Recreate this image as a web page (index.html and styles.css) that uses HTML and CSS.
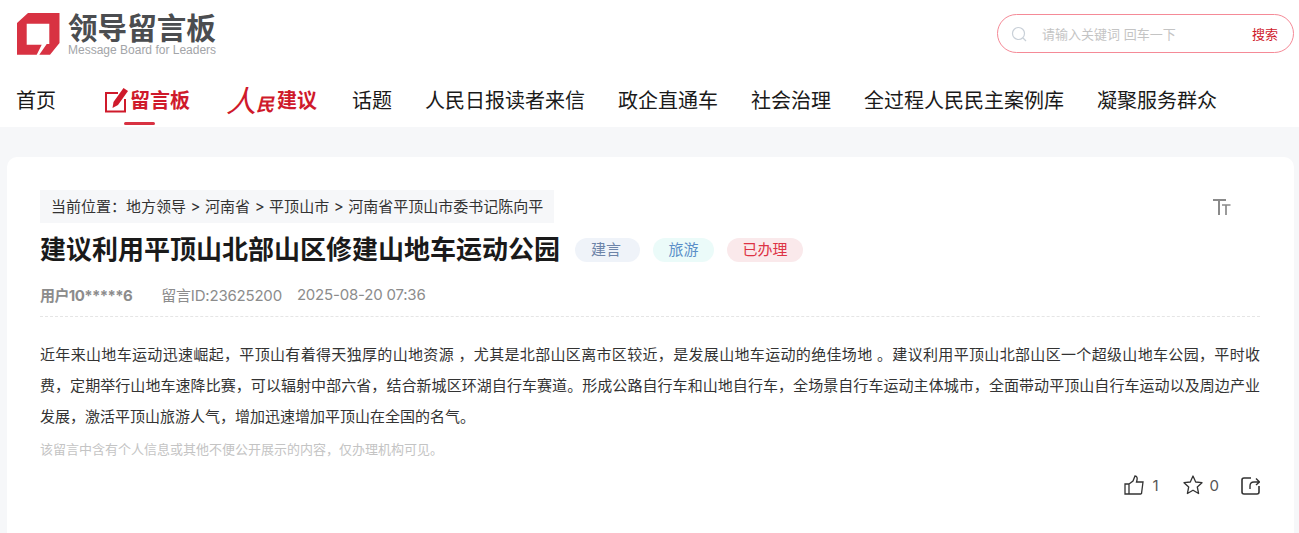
FILE: index.html
```html
<!DOCTYPE html>
<html lang="zh-CN">
<head>
<meta charset="utf-8">
<title>领导留言板</title>
<link rel="stylesheet" href="styles.css">
</head>
<body>
<header class="header">
  <div class="top">
    <div class="logo">
      <svg class="logo-mark" width="43" height="42" viewBox="0 0 43 42"><path fill="#d83242" d="M11 0H42.500V30L33 41.800H22.300L29.700 31H32.300V10.700H9.700V31.700H24.700L19.700 41.800H0V10Z"/></svg>
      <div class="logo-text">
        <div class="logo-cn">领导留言板</div>
        <div class="logo-en">Message Board for Leaders</div>
      </div>
    </div>
    <div class="search">
      <svg class="search-icon" width="16" height="16" viewBox="0 0 16 16"><circle cx="7.500" cy="7.500" r="6" fill="none" stroke="#c9d0d8" stroke-width="1.200"/><path d="M12 12l3 3" stroke="#c9d0d8" stroke-width="1.200"/></svg>
      <span class="search-ph">请输入关键词 回车一下</span>
      <span class="search-btn">搜索</span>
    </div>
  </div>
  <nav class="nav">
    <a class="nav-item nav-home">首页</a>
    <a class="nav-item nav-board">
      <svg width="24" height="25" viewBox="0 0 24 25"><path fill="none" stroke="#cf1a2b" stroke-width="2" d="M14 5H2V23.500H21V11"/><path fill="#cf1a2b" d="M19.500 0L24 3 14 17 8.500 20 9.500 14Z"/></svg>
      <span>留言板</span>
    </a>
    <a class="nav-item nav-people"><span class="people-hand"><span class="hand-big">人</span><span class="hand-small">民</span></span><span class="people-b">建议</span></a>
    <a class="nav-item">话题</a>
    <a class="nav-item">人民日报读者来信</a>
    <a class="nav-item">政企直通车</a>
    <a class="nav-item">社会治理</a>
    <a class="nav-item">全过程人民民主案例库</a>
    <a class="nav-item">凝聚服务群众</a>
  </nav>
</header>
<main class="main">
  <article class="card">
    <div class="crumb-row">
      <div class="crumb">当前位置：地方领导 &gt; 河南省 &gt; 平顶山市 &gt; 河南省平顶山市委书记陈向平</div>
      <svg class="font-size" width="20" height="17" viewBox="0 0 20 17"><path fill="none" stroke="#8a8a8a" stroke-width="2" d="M2 2H15M8 2V17"/><path fill="none" stroke="#8a8a8a" stroke-width="1.700" d="M11 7H19.500M15 7V17"/></svg>
    </div>
    <div class="title-row">
      <h1 class="title">建议利用平顶山北部山区修建山地车运动公园</h1>
      <span class="tag tag-a">建言</span>
      <span class="tag tag-b">旅游</span>
      <span class="tag tag-c">已办理</span>
    </div>
    <div class="meta">
      <b class="user">用户10*****6</b>
      <span class="msg-id">留言ID:23625200</span>
      <span>2025-08-20 07:36</span>
    </div>
    <p class="body">近年来山地车运动迅速崛起，平顶山有着得天独厚的山地资源 ，尤其是北部山区离市区较近，是发展山地车运动的绝佳场地 。建议利用平顶山北部山区一个超级山地车公园，平时收费，定期举行山地车速降比赛，可以辐射中部六省，结合新城区环湖自行车赛道。形成公路自行车和山地自行车，全场景自行车运动主体城市，全面带动平顶山自行车运动以及周边产业发展，激活平顶山旅游人气，增加迅速增加平顶山在全国的名气。</p>
    <p class="note">该留言中含有个人信息或其他不便公开展示的内容，仅办理机构可见。</p>
    <div class="actions">
      <span class="action action-like">
        <svg width="20" height="20" viewBox="0 0 20 20"><path fill="none" stroke="#333" stroke-width="1.300" d="M1 9H5V19H1ZM5 9L9 6 11 1C13 1 13.500 3 13 5L12.500 7H19L17.500 18.500 16.500 19H5"/></svg>
        <span>1</span>
      </span>
      <span class="action">
        <svg width="20" height="20" viewBox="0 0 20 20"><path fill="none" stroke="#333" stroke-width="1.300" stroke-linejoin="round" d="M10 1L12.700 7 19 7.700 14.300 12 15.600 18.500 10 15.200 4.400 18.500 5.700 12 1 7.700 7.300 7Z"/></svg>
        <span>0</span>
      </span>
      <span class="action">
        <svg width="19" height="19" viewBox="0 0 19 19"><path fill="none" stroke="#333" stroke-width="1.600" d="M10 2H3Q1 2 1 4V16Q1 18 3 18H16Q18 18 18 16V10"/><path fill="none" stroke="#333" stroke-width="1.400" d="M9 13V10Q9 6 13 6H18M15 2.500L18.500 6 15 9"/></svg>
      </span>
    </div>
  </article>
</main>
</body>
</html>
```

FILE: styles.css
```css
* { box-sizing: border-box; }
html, body { margin: 0; padding: 0; }
body {
  width: 1299px;
  height: 533px;
  overflow: hidden;
  background: #f6f7f9;
  font-family: Inter, "Noto Sans CJK SC", sans-serif;
  color: #1a1a1a;
}
.header { height: 127px; background: #fff; padding: 13px 5px 0 16px; }
.top { display: flex; justify-content: space-between; align-items: flex-start; height: 47px; }
.logo { display: flex; gap: 8px; padding-left: 1px; }
.logo-text { width: 150px; }
.logo-cn { font-size: 29.600px; line-height: 30px; font-weight: 700; color: #4b4d50; white-space: nowrap; }
.logo-en { font-family: "Liberation Sans", sans-serif; font-size: 12px; line-height: 14px; color: #a3a5a8; white-space: nowrap; }
.search { width: 297px; height: 39px; margin-top: 1px; border: 1px solid #f58a97; border-radius: 20px; display: flex; align-items: center; padding: 0 15px 0 13px; }
.search-icon { margin-right: 15px; }
.search-ph { flex: 1; font-size: 13px; color: #c4c4c4; }
.search-btn { font-size: 13px; color: #cf1a2b; }
.nav { display: flex; align-items: center; height: 41px; margin-top: 20px; font-size: 20px; color: #1a1a1a; }
.nav-item { margin-right: 33px; white-space: nowrap; line-height: 28px; }
.nav-home { margin-right: 48px; }
.nav-board { display: flex; align-items: center; gap: 2px; position: relative; margin-right: 36px; font-weight: 700; color: #cf1a2b; }
.nav-board::after { content: ""; position: absolute; left: 20px; bottom: -10px; width: 31px; height: 3px; border-radius: 2px; background: #d83242; }
.nav-people { display: flex; align-items: center; margin-right: 35px; color: #cf1a2b; }
.people-hand { display: flex; align-items: flex-end; width: 51px; font-style: italic; }
.hand-big { font-size: 30px; line-height: 34px; }
.hand-small { font-size: 18px; line-height: 26px; font-weight: 700; }
.people-b { font-weight: 700; }
.main { padding: 30px 5px 0 7px; }
.card { height: 420px; background: #fff; border-radius: 10px; padding: 33px 34px 0 33px; }
.crumb-row { display: flex; justify-content: space-between; align-items: center; height: 33px; }
.crumb { height: 33px; line-height: 33px; padding: 0 11px; background: #f6f7f9; font-size: 15px; color: #333; word-spacing: 0.350px; }
.font-size { margin-right: 29px; }
.title-row { display: flex; align-items: center; height: 32px; margin-top: 11px; }
.title { margin: 0 15px 0 0; font-size: 26px; font-weight: 700; line-height: 32px; color: #1a1a1a; white-space: nowrap; }
.tag { height: 24px; line-height: 24px; padding: 0 15.500px; border-radius: 12px; font-size: 15px; margin-right: 13px; }
.tag-a { padding: 0 19px 0 16px; background: #eff3f9; color: #6d84a8; }
.tag-b { background: #ebfbf9; color: #5a8fc8; }
.tag-c { background: #fae9eb; color: #dd3345; }
.meta { display: flex; align-items: center; height: 45px; margin-top: 6px; font-size: 15px; letter-spacing: -0.200px; color: #8c8c8c; border-bottom: 1px dashed #e5e5e5; }
.user { font-weight: 700; margin-right: 29px; letter-spacing: -0.600px; }
.msg-id { margin-right: 15px; }
.body { margin: 22px 0 0; font-size: 15px; line-height: 31px; color: #333; text-align: justify; }
.note { margin: 7px 0 0; font-size: 13px; line-height: 20px; color: #c4c4c4; }
.actions { display: flex; justify-content: flex-end; align-items: center; gap: 22px; margin-top: 16px; font-size: 15px; color: #555; }
.action { display: flex; align-items: center; gap: 7px; }
.action-like { gap: 8px; margin-right: 2px; }
```
